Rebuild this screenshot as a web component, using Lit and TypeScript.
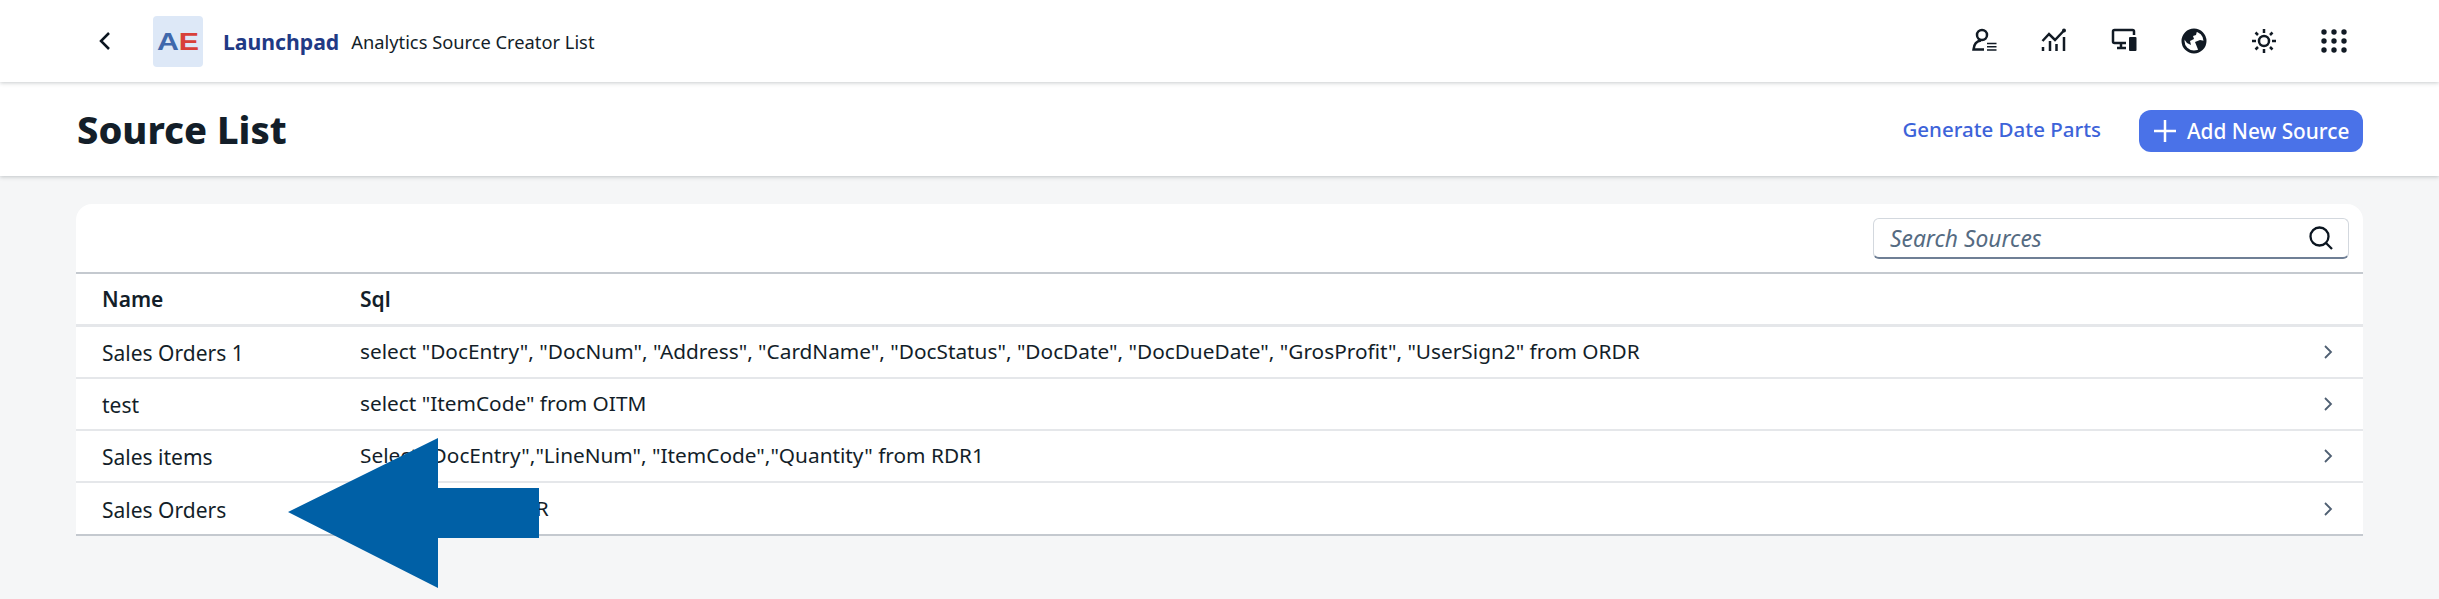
import { LitElement, html, css, svg } from "lit";
import { customElement } from "lit/decorators.js";

const rows = [
  ["Sales Orders 1", `select "DocEntry", "DocNum", "Address", "CardName", "DocStatus", "DocDate", "DocDueDate", "GrosProfit", "UserSign2" from ORDR`],
  ["test", `select "ItemCode" from OITM`],
  ["Sales items", `Select "DocEntry","LineNum", "ItemCode","Quantity" from RDR1`],
  ["Sales Orders", `select * from ORDR`],
];

const icons = [
  svg`<circle cx="11" cy="7" r="5" fill="none"/><path d="M10 12.500C5 13 3 16 2.500 21.500H13" fill="none"/><path d="M16 15.500h9.500M16 18.750h9.500M16 22h9.500" fill="none" stroke-width="1.700"/>`,
  svg`<path d="M1.500 13 8 6l6 6 9-9.500" fill="none"/><circle cx="23" cy="2.500" r="2" stroke="none" fill="currentColor"/><path d="M2 19v4M9 13v10M15.500 16v7M23 9v14" fill="none"/>`,
  svg`<path d="M15 15H3.500A1.500 1.500 0 0 1 2 13.500V3.500A1.500 1.500 0 0 1 3.500 2H21.500A1.500 1.500 0 0 1 23 3.500V7" fill="none"/><path d="M10 15v4M6 20h9" fill="none"/><rect x="18" y="9" width="7.500" height="14" rx="1" fill="currentColor" stroke="none"/>`,
  svg`<circle cx="13" cy="13" r="11" fill="none" stroke-width="3"/><path d="M5 5c4-3 8-3 11-2l-1 4-3 1 1 3-4 2 1 4-4-2-3-4zM14 14l5-2 5 1-1 6-5 5-2-5z" fill="currentColor" stroke="none"/>`,
  svg`<circle cx="13" cy="13" r="5" fill="none"/><path d="M13 1v4M13 21v4M1 13h4M21 13h4M4.500 4.500l2.500 2.500M19 19l2.500 2.500M4.500 21.500 7 19M19 7l2.500-2.500" fill="none"/>`,
  svg`${[4, 13, 22].flatMap((y) => [3, 13, 23].map((x) => svg`<circle cx=${x} cy=${y} r="2.700" fill="currentColor" stroke="none"/>`))}`,
];

@customElement("app-root")
export class AppRoot extends LitElement {
  static styles = css`
    :host {
      display: block;
      position: relative;
      height: 599px;
      overflow: hidden;
      background: #f5f6f7;
      font-family: "Noto Sans", Roboto, sans-serif;
      color: #1d2d3e;
    }
    .shell {
      height: 82px;
      background: #fff;
      display: flex;
      align-items: center;
      padding: 0 92px 0 97px;
      box-shadow: 0 1px 4px rgba(40, 50, 60, 0.25);
      position: relative;
      z-index: 2;
    }
    .back { width: 16px; height: 24px; margin-right: 40px; }
    .back path { fill: none; stroke: #0b1520; stroke-width: 2.500; }
    .logo {
      width: 50px;
      height: 51px;
      border-radius: 4px;
      background: #dde8f7;
      display: flex;
      align-items: center;
      justify-content: center;
      font: 700 23px "Liberation Sans", sans-serif;
      margin-right: 20px;
    }
    .logo div { transform: scaleX(1.32); padding-top: 2px; }
    .a { color: #3f68ac; }
    .e { color: #d8403a; }
    .brand { font-size: 21.200px; font-weight: 700; color: #1f3a85; margin-right: 12px; }
    .app { font-size: 18.300px; color: #131e29; }
    .spacer { flex: 1; }
    .icons { display: flex; gap: 44px; align-items: center; }
    .icons svg { width: 26px; height: 26px; display: block; color: #111a24; stroke: currentColor; stroke-width: 2.500; }
    .title {
      height: 94px;
      background: #fff;
      display: flex;
      align-items: center;
      padding: 0 76px 0 77px;
      box-shadow: 0 1px 4px rgba(40, 50, 60, 0.25);
      position: relative;
      z-index: 1;
    }
    h1 { margin: 0; font-size: 38px; font-weight: 800; color: #131e29; }
    .gen { color: #3d63d9; font-size: 20.500px; font-weight: 500; margin-right: 38px; }
    .add {
      width: 224px;
      height: 42px;
      margin-top: 4px;
      box-sizing: border-box;
      padding-left: 14px;
      display: flex;
      align-items: center;
      gap: 10px;
      background: #4a72e8;
      color: #fff;
      border-radius: 12px;
      font-size: 20.800px;
      font-weight: 500;
    }
    .add svg { width: 24px; height: 24px; stroke: #fff; stroke-width: 2.500; fill: none; }
    .card {
      margin: 28px 76px 0;
      background: #fff;
      border-radius: 16px 16px 0 0;
    }
    .bar {
      height: 70px;
      display: flex;
      justify-content: flex-end;
      align-items: flex-start;
      padding: 14px 14px 0 0;
      box-sizing: border-box;
      border-bottom: 2px solid #c4c9cf;
    }
    .search {
      width: 476px;
      height: 41px;
      box-sizing: border-box;
      border: 1px solid #d3d8de;
      border-bottom: 2px solid #6f7f95;
      border-radius: 6px;
      display: flex;
      align-items: center;
      justify-content: space-between;
      padding: 0 14px 0 16px;
      font-style: italic;
      font-size: 22.800px;
      color: #556b82;
    }
    .search svg { width: 26px; height: 26px; fill: none; stroke: #0b1520; stroke-width: 2.300; }
    .row {
      display: grid;
      grid-template-columns: 258px 1fr 40px;
      padding-left: 26px;
      align-items: center;
      height: 52px;
      box-sizing: border-box;
      border-bottom: 2px solid #e5e7ea;
      font-size: 21px;
      color: #131e29;
    }
    .head { height: 53px; border-bottom: 3px solid #e5e7ea; font-weight: 600; }
    .row.last { border-bottom: 2px solid #c4c9cf; height: 53px; }
    .name { padding-top: 2px; }
    .sql { padding-bottom: 2px; font-size: 20.800px; }
    .chev { width: 10px; height: 16px; fill: none; stroke: #4f5f72; stroke-width: 1.800; }
    .arrow { position: absolute; left: 288px; top: 438px; width: 252px; height: 150px; z-index: 3; }
    .arrow path { fill: #0060a6; }
  `;

  render() {
    return html`
      <header class="shell">
        <svg class="back" viewBox="0 0 16 24"><path d="M12 4 4 12l8 8" /></svg>
        <div class="logo"><div><span class="a">A</span><span class="e">E</span></div></div>
        <span class="brand">Launchpad</span>
        <span class="app">Analytics Source Creator List</span>
        <div class="spacer"></div>
        <div class="icons">${icons.map((i) => html`<svg viewBox="0 0 26 26">${i}</svg>`)}</div>
      </header>
      <section class="title">
        <h1>Source List</h1>
        <div class="spacer"></div>
        <span class="gen">Generate Date Parts</span>
        <div class="add">
          <svg viewBox="0 0 24 24"><path d="M12 1v22M1 12h22" /></svg>
          <span>Add New Source</span>
        </div>
      </section>
      <main class="card">
        <div class="bar">
          <div class="search">
            <span>Search Sources</span>
            <svg viewBox="0 0 26 26"><circle cx="11.500" cy="11.500" r="9" /><path d="m18 18 6 6" /></svg>
          </div>
        </div>
        <div class="row head"><span>Name</span><span>Sql</span><span></span></div>
        ${rows.map(
          (r, i) => html`<div class="row ${i === rows.length - 1 ? "last" : ""}">
            <span class="name">${r[0]}</span>
            <span class="sql">${r[1]}</span>
            <svg class="chev" viewBox="0 0 10 16"><path d="m2 2 6 6-6 6" /></svg>
          </div>`
        )}
      </main>
      <svg class="arrow" viewBox="0 0 252 150"><path d="M150 0V50H251V100H150V150L0 74Z" /></svg>
    `;
  }
}
